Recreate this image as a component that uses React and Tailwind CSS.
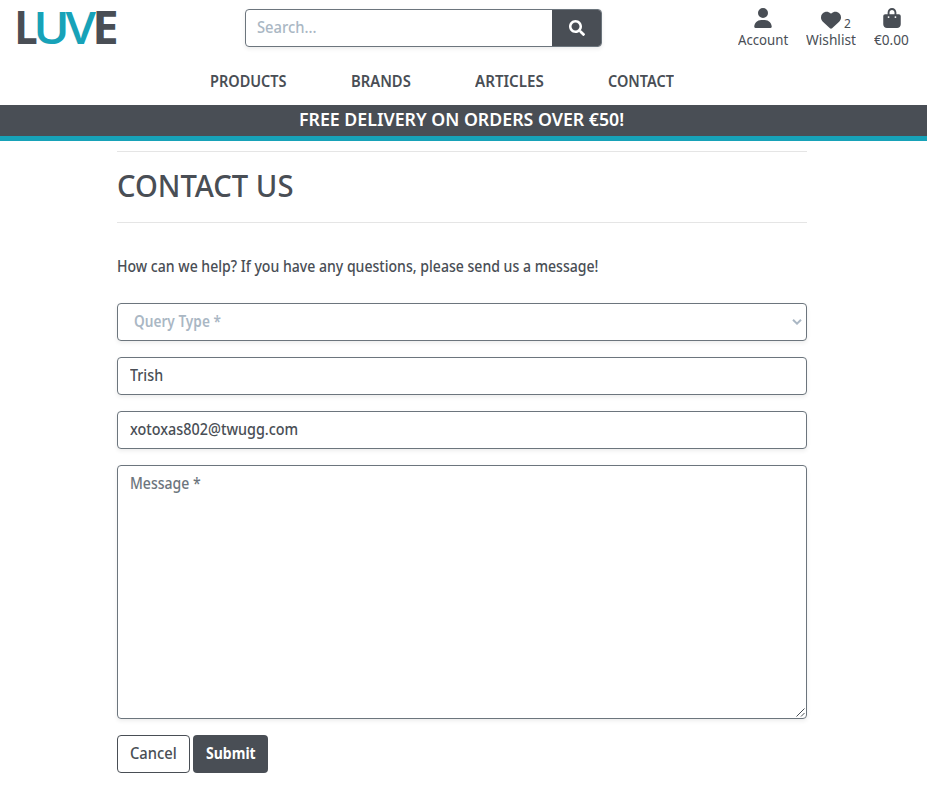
import { useLayoutEffect, useRef, useState } from "react";
import { FaUser, FaHeart, FaBagShopping } from "react-icons/fa6";
import { FaSearch } from "react-icons/fa";

// Condenses a line of text horizontally so that it occupies exactly `width` pixels.
function Fit({ width, className = "", children }) {
  const ref = useRef(null);
  const [scale, setScale] = useState(1);
  useLayoutEffect(() => {
    setScale(width / ref.current.offsetWidth);
  }, [width]);
  return (
    <span className={`inline-block whitespace-nowrap ${className}`} style={{ width }}>
      <span ref={ref} className="inline-block origin-left" style={{ transform: `scaleX(${scale})` }}>
        {children}
      </span>
    </span>
  );
}

function Logo() {
  return (
    <svg className="block h-[56px] w-[124px]" viewBox="0 0 124 56" fontFamily="'Open Sans', sans-serif" fontSize="46">
      <g fill="#494e55" fontWeight="700">
        <text x="14.200" y="44" textLength="23.500" lengthAdjust="spacingAndGlyphs">L</text>
        <text x="92.200" y="44" textLength="26.500" lengthAdjust="spacingAndGlyphs">E</text>
      </g>
      <g fill="#17a2b8" fontWeight="600">
        <text x="33.200" y="43.500" textLength="36.500" lengthAdjust="spacingAndGlyphs">U</text>
        <text x="65.500" y="44" textLength="30.500" lengthAdjust="spacingAndGlyphs">V</text>
      </g>
    </svg>
  );
}

const field = "flex h-[38px] items-center rounded border border-[#6c757d] bg-white pb-[2px] shadow-[0_2px_4px_rgba(0,0,0,0.075)]";

export default function App() {
  return (
    <div className="h-[792px] overflow-hidden bg-white font-['Noto_Sans','Open_Sans',sans-serif] text-base leading-6 text-[#494e55]">
      <header>
        <div className="flex h-[56px]">
          <div className="w-[245px]"><Logo /></div>
          <div className="mt-[9px] flex h-[38px] w-[357px] overflow-hidden rounded border border-[#6c757d] shadow-[0_2px_4px_rgba(0,0,0,0.075)]">
            <div className="flex flex-1 items-center pb-[2px] pl-[11px] font-medium text-[#aab7c4]"><Fit width={60}>Search...</Fit></div>
            <button className="flex w-[49px] items-center justify-center bg-[#494e55] text-white"><FaSearch size={16} /></button>
          </div>
          <div className="ml-[136px] flex text-sm leading-5">
            <div className="flex w-[50px] flex-col items-center pt-[8px]">
              <FaUser size={20} className="h-5 w-[18px]" />
              <span className="mt-[2px]"><Fit width={50}>Account</Fit></span>
            </div>
            <div className="ml-[18px] flex w-[50px] flex-col items-center pt-[10px]">
              <div className="flex h-5 w-full items-start gap-[3px] pl-[15px]">
                <FaHeart size={20} className="shrink-0" />
                <span className="mt-[4px] h-4 pt-[2px] text-xs leading-4"><Fit width={7}>2</Fit></span>
              </div>
              <Fit width={50}>Wishlist</Fit>
            </div>
            <div className="ml-[18px] flex w-[35px] flex-col items-center pt-[8px]">
              <FaBagShopping size={20} className="h-5 w-[18px]" />
              <span className="mt-[2px]"><Fit width={35}>€0.00</Fit></span>
            </div>
          </div>
        </div>
        <nav className="flex h-[49px] items-center gap-[64px] pl-[210px] pt-[1px] font-semibold">
          <Fit width={77}>PRODUCTS</Fit>
          <Fit width={60}>BRANDS</Fit>
          <Fit width={69}>ARTICLES</Fit>
          <Fit width={66}>CONTACT</Fit>
        </nav>
        <div className="flex h-[36px] items-start justify-center border-b-[5px] border-[#17a2b8] bg-[#494e55] pr-[4px] pt-[2px] text-[18.5px] font-semibold text-white">
          <Fit width={325}>FREE DELIVERY ON ORDERS OVER €50!</Fit>
        </div>
      </header>
      <main className="ml-[117px] mt-[10px] w-[690px]">
        <div className="flex h-[72px] items-center border-y border-[#e5e5e5] pb-[4px] text-[31px] font-medium leading-[38px]">
          <Fit width={176}>CONTACT US</Fit>
        </div>
        <p className="mb-[25px] mt-[31px]"><Fit width={481} className="font-medium">How can we help? If you have any questions, please send us a message!</Fit></p>
        <div className="flex flex-col gap-4">
          <div className={`${field} justify-between pl-[16px] pr-[4px] font-semibold text-[#aab7c4]`}>
            <Fit width={87}>Query Type *</Fit>
            <svg className="mt-[2px] h-[6px] w-[10px]" viewBox="0 0 10 6" fill="none" stroke="currentColor" strokeWidth="2"><path d="M1 .8 5 4.600 9 .8" /></svg>
          </div>
          <div className={`${field} pl-3 font-medium`}><Fit width={33}>Trish</Fit></div>
          <div className={`${field} pl-3 font-medium`}><Fit width={168}>xotoxas802@twugg.com</Fit></div>
          <div className="flex h-[254px] items-start justify-between rounded border border-[#6c757d] pl-3 pt-[5px] font-medium text-[#6c757d] shadow-[0_2px_4px_rgba(0,0,0,0.075)]">
            <Fit width={71}>Message *</Fit>
            <svg className="mb-[1px] mr-[1px] h-[9px] w-[9px] self-end" viewBox="0 0 9 9" stroke="#495057" strokeWidth="1"><path d="M.5 8.500 8.500.5M5 8.500 8.500 5" /></svg>
          </div>
        </div>
        <div className="mt-4 flex gap-[3px]">
          <button className="h-[38px] w-[73px] rounded border border-[#494e55] pb-[2px] font-medium"><Fit width={47}>Cancel</Fit></button>
          <button className="h-[38px] w-[75px] rounded bg-[#494e55] pb-[2px] font-bold text-white"><Fit width={50}>Submit</Fit></button>
        </div>
      </main>
    </div>
  );
}
